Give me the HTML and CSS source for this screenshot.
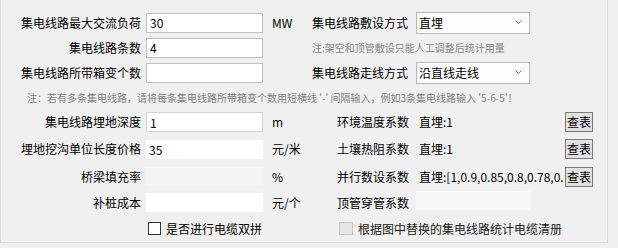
FILE: index.html
```html
<!DOCTYPE html>
<html lang="zh">
<head>
<meta charset="utf-8">
<link rel="stylesheet" href="styles.css">
</head>
<body>
<div class="panel">
  <div class="top">
    <label class="lbl">集电线路最大交流负荷</label>
    <input class="txt bordered" type="text" value="30">
    <span class="unit">MW</span>
    <label class="rlbl">集电线路敷设方式</label>
    <div class="combo"><span>直埋</span><svg width="7" height="5" viewBox="0 0 7 5"><path d="M0.5 0.5 L3.5 3.5 L6.5 0.5" fill="none" stroke="#707070" stroke-width="1"/></svg></div>

    <label class="lbl">集电线路条数</label>
    <input class="txt bordered" type="text" value="4">
    <span class="unit"></span>
    <div class="hint">注:架空和顶管敷设只能人工调整后统计用量</div>

    <label class="lbl">集电线路所带箱变个数</label>
    <input class="txt bordered" type="text" value="">
    <span class="unit"></span>
    <label class="rlbl">集电线路走线方式</label>
    <div class="combo"><span>沿直线走线</span><svg width="7" height="5" viewBox="0 0 7 5"><path d="M0.5 0.5 L3.5 3.5 L6.5 0.5" fill="none" stroke="#707070" stroke-width="1"/></svg></div>
  </div>

  <div class="note">注：若有多条集电线路，请将每条集电线路所带箱变个数用短横线 '-' 间隔输入，例如3条集电线路输入 '5-6-5'！</div>

  <div class="bottom">
    <label class="lbl">集电线路埋地深度</label>
    <input class="txt bordered light" type="text" value="1">
    <span class="unit">m</span>
    <label class="flbl">环境温度系数</label>
    <span class="val">直埋:1</span>
    <button class="btn">查表</button>

    <label class="lbl">埋地挖沟单位长度价格</label>
    <input class="txt plain" type="text" value="35">
    <span class="unit">元/米</span>
    <label class="flbl">土壤热阻系数</label>
    <span class="val">直埋:1</span>
    <button class="btn">查表</button>

    <label class="lbl">桥梁填充率</label>
    <input class="txt disabled" type="text" value="" disabled>
    <span class="unit">%</span>
    <label class="flbl">并行数设系数</label>
    <span class="val">直埋:[1,0.9,0.85,0.8,0.78,0.</span>
    <button class="btn">查表</button>

    <label class="lbl">补桩成本</label>
    <input class="txt plain" type="text" value="">
    <span class="unit">元/个</span>
    <label class="flbl">顶管穿管系数</label>
    <input class="txt disabled2" type="text" value="" disabled>
    <span></span>

    <span></span>
    <label class="chk"><input class="box" type="checkbox"><span>是否进行电缆双拼</span></label>
    <label class="chk chk-right"><input class="box off" type="checkbox" disabled><span>根据图中替换的集电线路统计电缆清册</span></label>
  </div>
</div>
</body>
</html>
```

FILE: styles.css
```css
html, body {
  margin: 0;
  padding: 0;
  background: #f0f0f0;
}

body {
  font-family: "Noto Sans CJK SC", "Microsoft YaHei", sans-serif;
  font-size: 12px;
  color: #000;
  width: 618px;
  height: 248px;
  overflow: hidden;
}

.panel {
  box-sizing: border-box;
  width: 608px;
  height: 243px;
  border: 1px solid #d7e0e7;
  border-top: none;
  padding-top: 10px;
}

.top {
  display: grid;
  grid-template-columns: 145px 117px 49px 104px 114px;
  grid-template-rows: 25px 25px 25px;
  align-items: center;
}

.bottom {
  display: grid;
  grid-template-columns: 145px 117px 49px 104px 149px 28px;
  grid-template-rows: 24px 30px 25px 27px 24px;
  align-items: center;
}

.lbl {
  text-align: right;
  padding-right: 5px;
  white-space: nowrap;
  line-height: 16px;
}

.unit {
  padding-left: 9px;
  line-height: 16px;
}

.rlbl {
  white-space: nowrap;
  line-height: 16px;
}

.flbl {
  padding-left: 25px;
  white-space: nowrap;
  line-height: 16px;
}

.txt {
  box-sizing: border-box;
  appearance: none;
  -webkit-appearance: none;
  margin: 0;
  width: 117px;
  height: 20px;
  padding: 0 3px;
  font-family: inherit;
  font-size: 12px;
  color: #000;
  background: #fff;
  border: none;
  outline: none;
}

.bordered {
  border: 1px solid #bfbfbf;
}

.bordered.light {
  border-color: #d2d2d2;
}

.plain {
  height: 19px;
}

.disabled {
  background: #f4f4f4;
  height: 19px;
}

.disabled2 {
  background: #f7f7f7;
  width: 114px;
  height: 19px;
  margin-top: -4px;
}

.combo {
  box-sizing: border-box;
  height: 22px;
  width: 114px;
  background: #fdfdfd;
  border: 1px solid #b9b9b9;
  display: flex;
  align-items: center;
  justify-content: space-between;
  padding: 0 7px 0 2px;
}

.hint {
  grid-column: 4 / span 2;
  font-size: 10px;
  color: #858585;
  white-space: nowrap;
  line-height: 14px;
}

.note {
  height: 25px;
  line-height: 25px;
  padding-left: 26px;
  font-size: 10px;
  color: #808080;
  white-space: nowrap;
}

.val {
  padding-left: 3px;
  white-space: nowrap;
  overflow: hidden;
  line-height: 16px;
}

.btn {
  box-sizing: border-box;
  width: 28px;
  height: 20px;
  margin: 0;
  padding: 0;
  font-family: inherit;
  font-size: 12px;
  color: #000;
  background: #e1e1e1;
  border: 1px solid #7a7a7a;
  line-height: 16px;
}

.chk {
  display: flex;
  align-items: center;
  gap: 5px;
  grid-column: 2 / span 2;
  padding-left: 2px;
  white-space: nowrap;
}

.chk-right {
  grid-column: 4 / span 3;
  padding-left: 27px;
  color: #1a1a1a;
}

.box {
  appearance: none;
  -webkit-appearance: none;
  box-sizing: border-box;
  margin: 0;
  width: 13px;
  height: 13px;
  background: #fff;
  border: 1px solid #333;
  flex: none;
}

.box.off {
  width: 14px;
  height: 13px;
  background: #e6e6e6;
  border-color: #c6c6c6;
}
```
